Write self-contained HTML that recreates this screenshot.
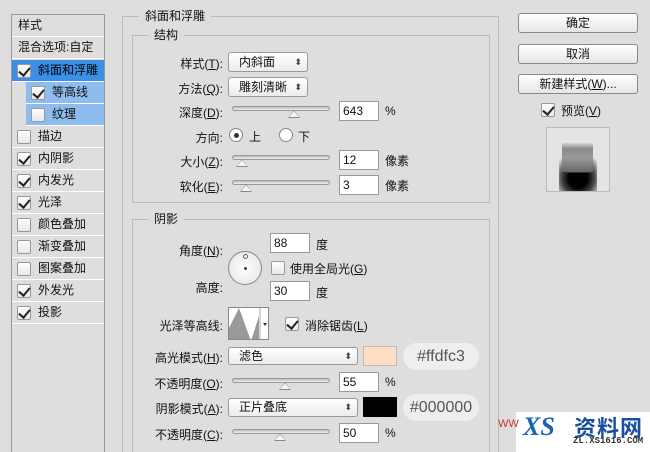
<!DOCTYPE html><html><head><meta charset="utf-8"><style>
*{box-sizing:border-box;margin:0;padding:0}
html,body{width:650px;height:452px;overflow:hidden}
body{background:#dedede;font-family:"Liberation Sans","Noto Sans CJK SC",sans-serif;font-size:12px;color:#111;position:relative}
.a{position:absolute}
.list{left:11px;top:14px;width:94px;height:440px;border:1px solid #999;border-bottom:none;background:#dedede}
.row{position:absolute;left:0;width:92px;height:22px;border-bottom:1px solid #fff;line-height:21px;padding-left:26px}
.cb{position:absolute;width:14px;height:14px;border:1px solid #999;border-radius:2px;background:linear-gradient(#fff,#e8e8e8)}
.cb.k::after{content:"";position:absolute;left:3px;top:0px;width:5px;height:9px;border:solid #222;border-width:0 2px 2px 0;transform:rotate(40deg)}
.fs{border:1px solid #bbb}
.lg{position:absolute;background:#dedede;padding:0 6px}
.lab{position:absolute;text-align:right;width:110px}
.sel{position:absolute;height:20px;border:1px solid #999;border-radius:3px;background:linear-gradient(#fff,#ececec);padding-left:10px;line-height:18px}
.sel::after{content:"⬍";position:absolute;right:5px;top:0;font-size:9px;color:#444}
.inp{position:absolute;width:40px;height:20px;background:#fff;border:1px solid #999;line-height:18px;padding-left:3px}
.sl{position:absolute;width:98px;height:5px;border:1px solid #999;border-radius:3px;background:linear-gradient(#bbb,#eee)}
.th{position:absolute;top:2px;width:0;height:0;border-left:6px solid transparent;border-right:6px solid transparent;border-bottom:8px solid #888}
.th::after{content:"";position:absolute;left:-5px;top:1px;border-left:5px solid transparent;border-right:5px solid transparent;border-bottom:6px solid #f4f4f4}
.btn{position:absolute;left:518px;width:120px;height:20px;border:1px solid #888;border-radius:3px;background:linear-gradient(#fff,#e6e6e6);text-align:center;line-height:18px;font-size:12px}
.pill{position:absolute;height:27px;border-radius:14px;background:#eeeeee;color:#555;font-size:16px;line-height:27px;text-align:center}
</style></head><body>
<div class="a list">
<div class="row" style="top:0;padding-left:6px">样式</div>
<div class="row" style="top:22px;padding-left:6px">混合选项:自定</div>
<div class="row" style="top:45px;background:#3b8fe6;color:#000"><span class="cb k" style="left:5px;top:4px"></span>斜面和浮雕</div>
<div class="row" style="top:67px;left:14px;width:78px;background:#8fbcee;padding-left:26px"><span class="cb k" style="left:5px;top:4px"></span>等高线</div>
<div class="row" style="top:89px;left:14px;width:78px;background:#8fbcee;padding-left:26px"><span class="cb" style="left:5px;top:4px"></span>纹理</div>
<div class="row" style="top:111px"><span class="cb" style="left:5px;top:4px"></span>描边</div>
<div class="row" style="top:133px"><span class="cb k" style="left:5px;top:4px"></span>内阴影</div>
<div class="row" style="top:155px"><span class="cb k" style="left:5px;top:4px"></span>内发光</div>
<div class="row" style="top:177px"><span class="cb k" style="left:5px;top:4px"></span>光泽</div>
<div class="row" style="top:199px"><span class="cb" style="left:5px;top:4px"></span>颜色叠加</div>
<div class="row" style="top:221px"><span class="cb" style="left:5px;top:4px"></span>渐变叠加</div>
<div class="row" style="top:243px"><span class="cb" style="left:5px;top:4px"></span>图案叠加</div>
<div class="row" style="top:265px"><span class="cb k" style="left:5px;top:4px"></span>外发光</div>
<div class="row" style="top:287px"><span class="cb k" style="left:5px;top:4px"></span>投影</div>
</div>

<div class="a fs" style="left:122px;top:16px;width:377px;height:450px"></div>
<div class="lg" style="left:139px;top:7px">斜面和浮雕</div>
<div class="a fs" style="left:132px;top:35px;width:358px;height:168px"></div>
<div class="lg" style="left:148px;top:26px">结构</div>
<div class="a fs" style="left:132px;top:219px;width:358px;height:240px"></div>
<div class="lg" style="left:148px;top:210px">阴影</div>

<div class="lab" style="left:113px;top:55px">样式(<u>T</u>):</div>
<div class="sel" style="left:228px;top:52px;width:80px">内斜面</div>
<div class="lab" style="left:113px;top:80px">方法(<u>Q</u>):</div>
<div class="sel" style="left:228px;top:77px;width:80px">雕刻清晰</div>
<div class="lab" style="left:113px;top:104px">深度(<u>D</u>):</div>
<div class="sl" style="left:232px;top:106px"></div><div class="th" style="left:288px;top:110px"></div>
<div class="inp" style="left:339px;top:101px">643</div><div class="a" style="left:385px;top:104px">%</div>
<div class="lab" style="left:113px;top:129px">方向:</div>
<div class="a" style="left:229px;top:128px;width:14px;height:14px;border:1px solid #888;border-radius:50%;background:#fff"></div><div class="a" style="left:234px;top:133px;width:5px;height:5px;border-radius:50%;background:#333"></div>
<div class="a" style="left:249px;top:128px">上</div>
<div class="a" style="left:279px;top:128px;width:14px;height:14px;border:1px solid #888;border-radius:50%;background:#fff"></div>
<div class="a" style="left:298px;top:128px">下</div>
<div class="lab" style="left:113px;top:153px">大小(<u>Z</u>):</div>
<div class="sl" style="left:232px;top:155px"></div><div class="th" style="left:236px;top:159px"></div>
<div class="inp" style="left:339px;top:150px">12</div><div class="a" style="left:385px;top:152px">像素</div>
<div class="lab" style="left:113px;top:178px">软化(<u>E</u>):</div>
<div class="sl" style="left:232px;top:180px"></div><div class="th" style="left:240px;top:184px"></div>
<div class="inp" style="left:339px;top:175px">3</div><div class="a" style="left:385px;top:177px">像素</div>

<div class="lab" style="left:113px;top:242px">角度(<u>N</u>):</div>
<div class="a" style="left:228px;top:251px;width:34px;height:34px;border:1px solid #888;border-radius:50%;background:radial-gradient(#fff,#e2e2e2)"></div>
<div class="a" style="left:243px;top:254px;width:5px;height:5px;border:1px solid #666;border-radius:50%"></div>
<div class="a" style="left:244px;top:267px;width:3px;height:3px;background:#444;border-radius:50%"></div>
<div class="inp" style="left:270px;top:233px">88</div><div class="a" style="left:316px;top:236px">度</div>
<div class="cb" style="left:271px;top:261px"></div><div class="a" style="left:290px;top:260px">使用全局光(<u>G</u>)</div>
<div class="lab" style="left:113px;top:279px">高度:</div>
<div class="inp" style="left:270px;top:281px">30</div><div class="a" style="left:316px;top:284px">度</div>
<div class="lab" style="left:113px;top:317px">光泽等高线:</div>
<div class="a" style="left:228px;top:307px;width:41px;height:33px;border:1px solid #888;background:#fff;overflow:hidden">
<svg width="41" height="33"><polygon points="0,33 0,20 10,0 22,33" fill="#999"/><polygon points="22,33 30,8 30,33" fill="#999"/><line x1="31" y1="0" x2="31" y2="33" stroke="#aaa"/><polygon points="34,15 38,15 36,18" fill="#333"/></svg></div>
<div class="cb k" style="left:285px;top:317px"></div><div class="a" style="left:305px;top:317px">消除锯齿(<u>L</u>)</div>
<div class="lab" style="left:113px;top:349px">高光模式(<u>H</u>):</div>
<div class="sel" style="left:228px;top:347px;width:130px;height:18px;line-height:16px">滤色</div>
<div class="a" style="left:363px;top:346px;width:34px;height:20px;background:#ffdfc3;border:1px solid #bbb"></div>
<div class="pill" style="left:403px;top:343px;width:76px">#ffdfc3</div>
<div class="lab" style="left:113px;top:375px">不透明度(<u>O</u>):</div>
<div class="sl" style="left:232px;top:378px"></div><div class="th" style="left:279px;top:382px"></div>
<div class="inp" style="left:339px;top:372px">55</div><div class="a" style="left:385px;top:375px">%</div>
<div class="lab" style="left:113px;top:400px">阴影模式(<u>A</u>):</div>
<div class="sel" style="left:228px;top:398px;width:130px;height:19px;line-height:17px">正片叠底</div>
<div class="a" style="left:363px;top:397px;width:34px;height:20px;background:#000"></div>
<div class="pill" style="left:403px;top:394px;width:76px">#000000</div>
<div class="lab" style="left:113px;top:426px">不透明度(<u>C</u>):</div>
<div class="sl" style="left:232px;top:429px"></div><div class="th" style="left:274px;top:433px"></div>
<div class="inp" style="left:339px;top:423px">50</div><div class="a" style="left:385px;top:426px">%</div>

<div class="btn" style="top:13px">确定</div>
<div class="btn" style="top:44px">取消</div>
<div class="btn" style="top:74px">新建样式(<u>W</u>)...</div>
<div class="cb k" style="left:541px;top:103px"></div><div class="a" style="left:561px;top:102px">预览(<u>V</u>)</div>
<div class="a" style="left:546px;top:127px;width:64px;height:65px;border:1px solid #bbb;background:#e4e4e4;overflow:hidden">
<div class="a" style="left:12px;top:30px;width:38px;height:40px;background:radial-gradient(ellipse at 50% 50%,#000 35%,#444 60%,rgba(228,228,228,0) 95%)"></div>
<div class="a" style="left:15px;top:13px;width:31px;height:32px;background:linear-gradient(#f2f2f2,#8a8a8a 25%,#999 55%,#666);border-bottom:1px solid #333"></div>
</div>
<div class="a" style="left:516px;top:412px;width:134px;height:40px;background:#fff"></div>
<div class="a" style="left:498px;top:418px;color:#c33;font-size:11px">WW</div>
<div class="a" style="left:523px;top:412px;color:#1a63b5;font-style:italic;font-size:26px;font-weight:bold;font-family:'Liberation Serif',serif">XS</div>
<div class="a" style="left:574px;top:411px;color:#1a4fa0;font-size:22px;font-weight:bold;letter-spacing:1px">资料网</div>
<div class="a" style="left:573px;top:436px;color:#333;font-size:9px;font-family:'Liberation Mono',monospace;font-weight:bold">ZL.XS1616.COM</div>
</body></html>
